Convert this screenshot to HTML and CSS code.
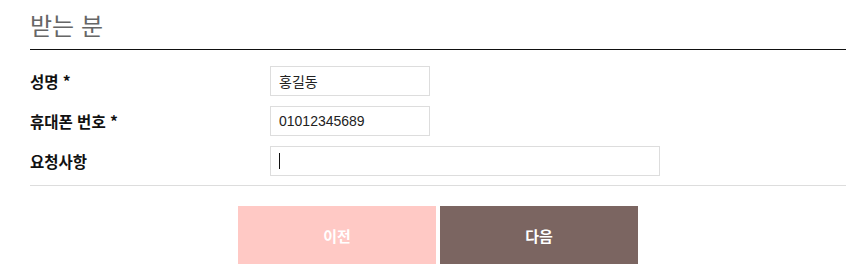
FILE: index.html
```html
<!DOCTYPE html>
<html lang="ko">
<head>
<meta charset="utf-8">
<title>받는 분</title>
<link rel="stylesheet" href="styles.css">
</head>
<body>
<div class="wrap">
  <h2 class="title">받는 분</h2>
  <div class="form">
    <div class="row">
      <div class="label">성명 *</div>
      <div class="field short">홍길동</div>
    </div>
    <div class="row">
      <div class="label">휴대폰 번호 *</div>
      <div class="field short">01012345689</div>
    </div>
    <div class="row">
      <div class="label">요청사항</div>
      <div class="field long"><span class="caret"></span></div>
    </div>
  </div>
  <div class="actions">
    <button class="btn prev" type="button">이전</button>
    <button class="btn next" type="button">다음</button>
  </div>
</div>
</body>
</html>
```

FILE: styles.css
```css
html, body {
  margin: 0;
  padding: 0;
  background: #fff;
}
body {
  font-family: "Noto Sans CJK KR", "Liberation Sans", sans-serif;
  color: #111;
}
.wrap {
  margin-left: 30px;
  width: 816px;
}
.title {
  margin: 0;
  height: 49px;
  line-height: 49px;
  font-size: 24px;
  font-weight: 400;
  color: #666;
  border-bottom: 1px solid #111;
}
.form {
  display: flex;
  flex-direction: column;
  gap: 10px;
  padding: 16px 0 9px;
  border-bottom: 1px solid #ddd;
}
.row {
  display: flex;
  align-items: center;
  height: 30px;
}
.label {
  width: 240px;
  font-size: 15.5px;
  font-weight: 700;
  color: #111;
}
.field {
  box-sizing: border-box;
  height: 30px;
  border: 1px solid #ddd;
  padding: 0 8px;
  display: flex;
  align-items: center;
  font-family: "Liberation Sans", "Noto Sans CJK KR", sans-serif;
  font-size: 14px;
  color: #222;
}
.short { width: 160px; }
.long { width: 390px; }
.caret {
  display: block;
  width: 1px;
  height: 16px;
  background: #111;
}
.actions {
  display: flex;
  justify-content: center;
  gap: 4px;
  padding-top: 20px;
}
.btn {
  width: 198px;
  height: 58px;
  border: 0;
  margin: 0;
  padding: 0;
  font-family: "Noto Sans CJK KR", sans-serif;
  font-size: 15px;
  font-weight: 700;
  color: #fff;
  cursor: pointer;
}
.prev { background: #ffc9c5; }
.next { background: #7b6561; }
```
